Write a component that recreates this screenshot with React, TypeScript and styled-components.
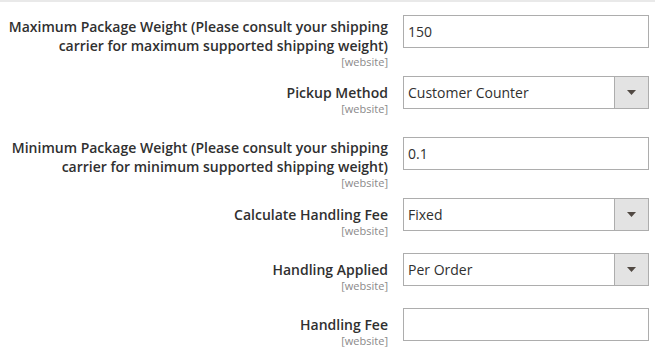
import React from "react";
import styled, { createGlobalStyle } from "styled-components";

const Global = createGlobalStyle`
  html, body { margin: 0; padding: 0; background: #fff; }
  body { font-family: "Open Sans", "Liberation Sans", sans-serif; color: #303030; }
`;

const Page = styled.div`
  width: 655px;
  border-top: 2px solid #e9e9e9;
  padding-top: 13px;
`;

const Row = styled.div<{ $gap: number }>`
  display: grid;
  grid-template-columns: 388px 246px;
  column-gap: 15px;
  align-items: start;
  margin-bottom: ${(p) => p.$gap}px;
`;

const LabelCell = styled.div<{ $pad: number }>`
  text-align: right;
  padding-top: ${(p) => p.$pad}px;
`;

const LabelText = styled.div`
  font-size: 14px;
  font-weight: 600;
  line-height: 19px;
  color: #303030;
`;

const Scope = styled.div`
  font-size: 11px;
  line-height: 13px;
  color: #8a8a8a;
`;

const TextInput = styled.input`
  box-sizing: border-box;
  width: 246px;
  height: 33px;
  margin: 0;
  border: 1px solid #adadad;
  border-radius: 0;
  padding: 0 4px;
  font-family: "Open Sans", "Liberation Sans", sans-serif;
  font-size: 14px;
  color: #303030;
  background: #fff;
  outline: none;
`;

const SelectBox = styled.div`
  box-sizing: border-box;
  width: 246px;
  height: 33px;
  border: 1px solid #adadad;
  display: flex;
  align-items: stretch;
  background: #fff;
`;

const SelectValue = styled.div`
  flex: 1;
  display: flex;
  align-items: center;
  padding-left: 4px;
  font-size: 14px;
  color: #303030;
`;

const ArrowButton = styled.div`
  width: 33px;
  border-left: 1px solid #adadad;
  background: #e3e3e3;
  display: flex;
  align-items: center;
  justify-content: center;
`;

const Arrow = () => (
  <svg width="9" height="5" viewBox="0 0 9 5">
    <polygon points="0,0 9,0 4.5,5" fill="#514943" />
  </svg>
);

type Field = {
  label: string[];
  kind: "input" | "select";
  value: string;
  pad: number;
  gap: number;
};

const fields: Field[] = [
  {
    label: ["Maximum Package Weight (Please consult your shipping", "carrier for maximum supported shipping weight)"],
    kind: "input",
    value: "150",
    pad: 2,
    gap: 8,
  },
  { label: ["Pickup Method"], kind: "select", value: "Customer Counter", pad: 7, gap: 22 },
  {
    label: ["Minimum Package Weight (Please consult your shipping", "carrier for minimum supported shipping weight)"],
    kind: "input",
    value: "0.1",
    pad: 1,
    gap: 9,
  },
  { label: ["Calculate Handling Fee"], kind: "select", value: "Fixed", pad: 7, gap: 16 },
  { label: ["Handling Applied"], kind: "select", value: "Per Order", pad: 7, gap: 16 },
  { label: ["Handling Fee"], kind: "input", value: "", pad: 7, gap: 0 },
];

export default function App() {
  return (
    <>
      <Global />
      <Page>
        {fields.map((f, i) => (
          <Row key={i} $gap={f.gap}>
            <LabelCell $pad={f.pad}>
              {f.label.map((l, j) => (
                <LabelText key={j}>{l}</LabelText>
              ))}
              <Scope>[website]</Scope>
            </LabelCell>
            {f.kind === "input" ? (
              <TextInput defaultValue={f.value} />
            ) : (
              <SelectBox>
                <SelectValue>{f.value}</SelectValue>
                <ArrowButton>
                  <Arrow />
                </ArrowButton>
              </SelectBox>
            )}
          </Row>
        ))}
      </Page>
    </>
  );
}
